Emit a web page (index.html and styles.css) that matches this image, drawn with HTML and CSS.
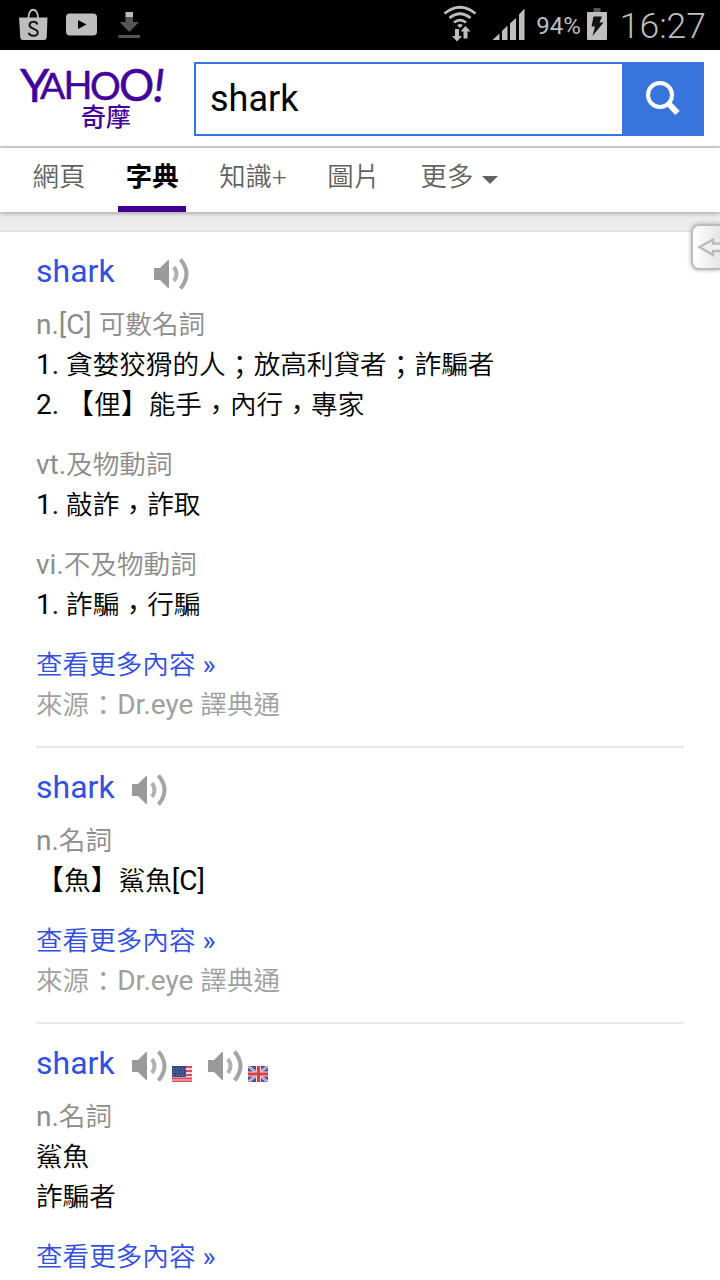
FILE: index.html
```html
<!DOCTYPE html>
<html lang="zh-Hant">
<head>
    <meta charset="UTF-8">
    <meta name="viewport" content="width=device-width, initial-scale=1.0">
    <title>shark - Yahoo奇摩字典</title>
    <link rel="stylesheet" href="styles.css">
</head>
<body>
    <!-- shared icons -->
    <svg class="defs">
        <symbol id="speaker" viewBox="0 0 36 34">
            <path d="M0 11h6L14 3q1-1 1 1v26q0 2-1 1L6 23H0z" fill="#999b9b"/>
            <path d="M20 10q5 7 0 14" fill="none" stroke="#b0b2b2" stroke-width="4"/>
            <path d="M26.500 2.500q12 14.500 0 29" fill="none" stroke="#a2a5a5" stroke-width="4"/>
        </symbol>
    </svg>

    <div class="status-bar">
        <svg class="status-left" width="160" height="50" viewBox="0 0 160 50">
            <path d="M19 17.500h28.500l-.8 20q-.2 2.500-2.700 2.500H23q-2.500 0-2.700-2.500z" fill="#bebebe"/>
            <path d="M28.500 18c0-11 9.500-11 9.500 0" fill="none" stroke="#bebebe" stroke-width="1.800"/>
            <path d="M37.500 24.500c-1.500-3.800-8-3.500-8 .5 0 4.500 8.300 3.200 8.300 7.500 0 4.200-7.800 4.500-9.300.3" fill="none" stroke="#111" stroke-width="1.900"/>
            <rect x="66" y="13.500" width="31" height="22" rx="4" fill="#bebebe"/>
            <path d="M78 20l8.500 4.500L78 29z" fill="#000"/>
            <path d="M125.500 16h7.500v6h6l-9.700 10-9.800-10h6z" fill="#555"/>
            <path d="M125.500 12h7.500v5h-7.500z" fill="#bebebe"/>
            <path d="M118.500 35h21.500v3h-21.500z" fill="#555"/>
        </svg>
        <div class="status-right">
            <svg width="84" height="50" viewBox="0 0 84 50">
                <g fill="none" stroke="#bebebe" stroke-width="2.800">
                    <path d="M1.500 13.500q15.500-12.500 31 0"/>
                    <path d="M6.500 18q10.500-8.500 21 0"/>
                    <path d="M11 22.500q6-4.700 12 0"/>
                </g>
                <path d="M14 25q3-2 6 0l-3 3z" fill="#bebebe"/>
                <path d="M12 29h4v7h3l-5 5.500L9 36h3zM20.500 38.500v-7h-3l5-5.500 5 5.500h-3v7z" fill="#bebebe"/>
                <path d="M49.500 40l7-6.500V40zM59 40V31l5.500-5.500V40zM67 40V23.500l6-5.500v22zM76 40V14.500L81.500 8.500V40z" fill="#bebebe"/>
            </svg>
            <span class="percent">94%</span>
            <svg width="22" height="50" viewBox="0 0 22 50">
                <path d="M7.500 8h7v5h-7z" fill="#555"/>
                <rect x="1" y="12" width="20" height="28" rx="1" fill="#bebebe"/>
                <path d="M7.500 16.500h8.500l-2.500 6h4l-11 13.500 2.500-9.500H5.500z" fill="#111"/>
            </svg>
            <span class="clock">16:27</span>
        </div>
    </div>

    <header class="header">
        <svg class="logo" width="146" height="72" viewBox="0 0 146 72">
            <text class="logo-latin" y="40"><tspan x="0" y="40" font-size="47">Y</tspan><tspan x="20" y="37" font-size="37.500">A</tspan><tspan x="43.500" y="37" font-size="38">H</tspan><tspan x="70" y="37.500" font-size="38.500">O</tspan><tspan x="99" y="39" font-size="44">O</tspan><tspan x="133" y="40" font-size="47" font-style="italic">!</tspan></text>
            <text x="61" y="64" font-size="25" class="logo-zh">奇摩</text>
        </svg>
        <form class="search">
            <input class="search-input" type="text" value="shark">
            <button class="search-button" type="button" aria-label="搜尋">
                <svg width="36" height="38" viewBox="0 0 36 38">
                    <circle cx="15" cy="16" r="12" fill="none" stroke="#fff" stroke-width="4"/>
                    <path d="M23 24l9.500 10" stroke="#fff" stroke-width="6"/>
                </svg>
            </button>
        </form>
    </header>

    <nav class="tabs">
        <a class="tab">網頁</a>
        <a class="tab active">字典</a>
        <a class="tab">知識+</a>
        <a class="tab">圖片</a>
        <a class="tab more">更多<i class="caret"></i></a>
    </nav>

    <main class="results">
        <section class="entry">
            <h2 class="word first"><a>shark</a><svg class="speaker"><use href="#speaker"/></svg></h2>
            <div class="sense">
                <p class="pos"><span class="en">n.[C] </span>可數名詞</p>
                <p><span class="en">1. </span>貪婪狡猾的人<span class="mark low">；</span>放高利貸者<span class="mark low">；</span>詐騙者</p>
                <p><span class="en">2. </span><span class="mark">【</span>俚<span class="mark">】</span>能手<span class="mark comma">，</span>內行<span class="mark comma">，</span>專家</p>
            </div>
            <div class="sense">
                <p class="pos"><span class="en">vt.</span>及物動詞</p>
                <p><span class="en">1. </span>敲詐<span class="mark comma">，</span>詐取</p>
            </div>
            <div class="sense">
                <p class="pos"><span class="en">vi.</span>不及物動詞</p>
                <p><span class="en">1. </span>詐騙<span class="mark comma">，</span>行騙</p>
            </div>
            <p><a>查看更多內容<span class="en"> »</span></a></p>
            <p class="source">來源<span class="mark low">：</span><span class="en">Dr.eye </span>譯典通</p>
        </section>

        <section class="entry">
            <h2 class="word"><a>shark</a><svg class="speaker"><use href="#speaker"/></svg></h2>
            <div class="sense">
                <p class="pos"><span class="en">n.</span>名詞</p>
                <p><span class="mark">【</span>魚<span class="mark">】</span>鯊魚<span class="en">[C]</span></p>
            </div>
            <p><a>查看更多內容<span class="en"> »</span></a></p>
            <p class="source">來源<span class="mark low">：</span><span class="en">Dr.eye </span>譯典通</p>
        </section>

        <section class="entry">
            <h2 class="word">
                <a>shark</a><svg class="speaker"><use href="#speaker"/></svg>
                <svg class="flag" viewBox="0 0 20 16">
                    <path fill="#f3d9dc" d="M0 0h20v16H0z"/>
                    <path stroke="#dc4a57" stroke-width="2" d="M0 1h20M0 5h20M0 9h20M0 12.500h20M0 15.500h20"/>
                    <path fill="#364a86" d="M0 0h14v11H0z"/>
                    <path stroke="#8b97bd" stroke-dasharray="1 2" d="M1 3h13M2 6h12M1 9h13"/>
                </svg>
                <svg class="speaker"><use href="#speaker"/></svg>
                <svg class="flag" viewBox="0 0 20 16">
                    <path fill="#3f569b" d="M0 0h20v16H0z"/>
                    <path stroke="#dfe2ee" stroke-width="2.500" d="M0 0l20 16M20 0L0 16"/>
                    <path stroke="#d65e70" d="M0 0l20 16M20 0L0 16"/>
                    <path stroke="#efd3db" stroke-width="5" d="M10.500 0v16M0 8h20"/>
                    <path stroke="#df3b4b" stroke-width="3" d="M10.500 0v16M0 8h20"/>
                </svg>
            </h2>
            <div class="sense">
                <p class="pos"><span class="en">n.</span>名詞</p>
                <p>鯊魚</p>
                <p>詐騙者</p>
            </div>
            <p><a>查看更多內容<span class="en"> »</span></a></p>
        </section>
    </main>

    <!-- floating side handle -->
    <div class="handle">
        <svg width="27" height="44" viewBox="0 0 27 44">
            <path d="M6.500 22L20 14.500V18.500h9v7.500h-9v4z" fill="#f0f0f0" stroke="#bbb" stroke-width="2.500"/>
        </svg>
    </div>
</body>
</html>
```
FILE: styles.css
```css
* {
    box-sizing: border-box;
}
body {
    margin: 0;
    height: 1280px;
    overflow: hidden;
    position: relative;
    background: #ececec;
    color: #000;
    font-family: Roboto, "Noto Sans CJK TC", sans-serif;
    font-size: 26.6px;
}
.defs {
    display: none;
}
.status-bar {
    display: flex;
    justify-content: space-between;
    height: 50px;
    background: #000;
    color: #bebebe;
}
.status-right {
    display: flex;
    align-items: center;
    padding-right: 14px;
}
.percent {
    margin: 2px 5px 0 9px;
    font-size: 24px;
    line-height: 50px;
}
.clock {
    margin: 2px 0 0 12px;
    font-size: 35.5px;
    font-weight: 350;
    line-height: 50px;
}
.header {
    display: flex;
    height: 98px;
    padding: 12px 16px 0 20px;
    background: #fff;
    border-bottom: 2px solid #d8d8d8;
}
.logo {
    flex: none;
    margin-right: 28px;
    overflow: visible;
    fill: #43019c;
}
.logo-latin {
    font-family: Lato, sans-serif;
    stroke: #43019c;
    stroke-width: 0.5px;
}
.logo-zh {
    font-family: "Noto Sans CJK TC", sans-serif;
    font-weight: 500;
}
.search {
    display: flex;
    flex: 1;
    min-width: 0;
    height: 74px;
}
.search-input {
    flex: 1;
    width: 0;
    min-width: 0;
    padding: 0 14px;
    border: 2px solid #3775dd;
    border-right: 0;
    border-radius: 0;
    background: #fff;
    color: #000;
    font: 36px Roboto, sans-serif;
}
.search-button {
    flex: none;
    width: 82px;
    padding: 0;
    border: 0;
    background: #3775dd;
}
.tabs {
    position: relative;
    display: flex;
    height: 64px;
    padding-left: 25px;
    background: #fff;
    box-shadow: 0 1px 5px rgba(0, 0, 0, 0.35);
    color: #626262;
    font-size: 26.4px;
    line-height: 58px;
}
.tab {
    height: 64px;
    margin-right: 25.3px;
    padding: 0 7.600px;
    white-space: nowrap;
    font-weight: 350;
}
.tab.active {
    border-bottom: 6px solid #400090;
    color: #000;
    font-weight: bold;
}
.caret {
    display: inline-block;
    margin-left: 9px;
    border: 8px solid transparent;
    border-top-color: #626262;
    border-bottom: 0;
    vertical-align: 2px;
}
.results {
    margin-top: 20px;
    padding: 0 36px;
    background: #fff;
    box-shadow: 0 -1px 1px #ddd;
}
.entry {
    padding: 20px 0 22px;
    border-bottom: 2px solid #e8e8e8;
}
.entry p {
    margin: 0;
    height: 40px;
    line-height: 42px;
    white-space: pre;
    font-weight: 350;
}
.en {
    font-size: 28px;
    font-weight: 400;
}
/* full-width punctuation runs a little wider than the characters */
.mark {
    font-size: 28px;
}
.low {
    line-height: 1;
    vertical-align: -2px;
}
.comma {
    line-height: 1;
    vertical-align: -6px;
}
.word {
    display: flex;
    align-items: flex-end;
    height: 40px;
    margin: 0 0 12px;
    padding-bottom: 1px;
    font-size: 32px;
    font-weight: 400;
    line-height: 40px;
}
.word a {
    margin-right: 17px;
}
.word.first a {
    margin-right: 39px;
}
a {
    color: inherit;
}
.entry a {
    color: #324fe1;
}
.speaker {
    width: 36px;
    height: 34px;
}
.flag {
    width: 20px;
    height: 16px;
    margin: 0 16px 1px 4px;
}
.sense {
    margin-bottom: 20px;
}
.entry .pos {
    color: #8c8c8c;
}
.entry .source {
    color: #a0a0a0;
}
.handle {
    position: absolute;
    top: 224px;
    right: 0;
    width: 29px;
    height: 46px;
    overflow: hidden;
    border: 2px solid #bcbcbc;
    border-right: 0;
    border-radius: 8px 0 0 8px;
    background: linear-gradient(to right, #fff, #e6e6e6);
    box-shadow: 0 0 4px #aaa;
}
.handle svg {
    display: block;
    margin-top: -1px;
}
```
